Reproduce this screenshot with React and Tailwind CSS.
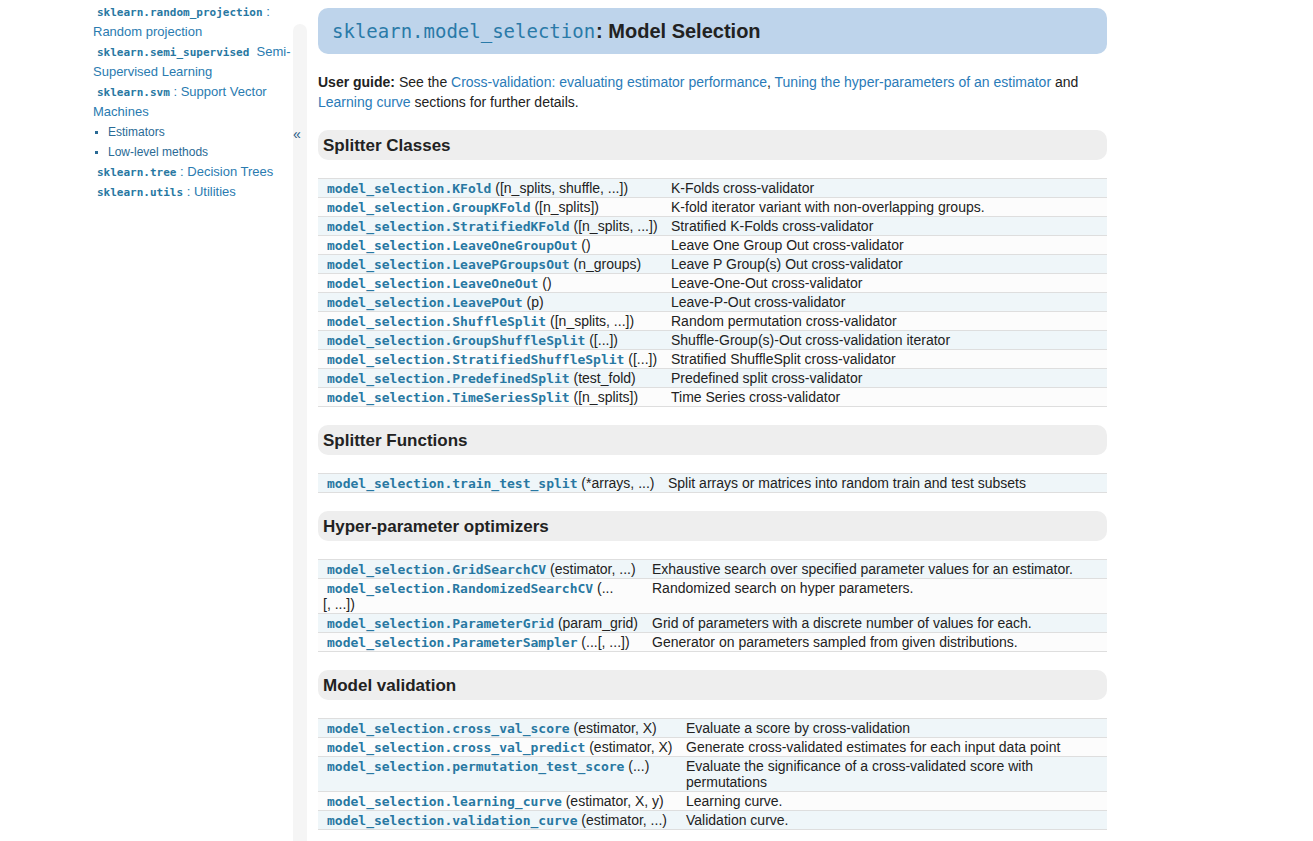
import React from 'react';

const sans = { fontFamily: '"Liberation Sans", Arial, sans-serif' };

const Code = ({ children, className = '' }) => (
  <code className={`font-['DejaVu_Sans_Mono',monospace] font-bold text-[#2878a2] text-[13px] leading-none pl-[4px] ${className}`}>
    {children}
  </code>
);

const SideCode = ({ children }) => (
  <code className="font-['DejaVu_Sans_Mono',monospace] font-bold text-[11px] leading-none text-[#2878a2] pl-[4px]">
    {children}
  </code>
);

const sections = [
  {
    title: 'Splitter Classes',
    col: 'grid-cols-[353px_1fr]',
    rows: [
      ['KFold', '([n_splits, shuffle, ...])', 'K-Folds cross-validator'],
      ['GroupKFold', '([n_splits])', 'K-fold iterator variant with non-overlapping groups.'],
      ['StratifiedKFold', '([n_splits, ...])', 'Stratified K-Folds cross-validator'],
      ['LeaveOneGroupOut', '()', 'Leave One Group Out cross-validator'],
      ['LeavePGroupsOut', '(n_groups)', 'Leave P Group(s) Out cross-validator'],
      ['LeaveOneOut', '()', 'Leave-One-Out cross-validator'],
      ['LeavePOut', '(p)', 'Leave-P-Out cross-validator'],
      ['ShuffleSplit', '([n_splits, ...])', 'Random permutation cross-validator'],
      ['GroupShuffleSplit', '([...])', 'Shuffle-Group(s)-Out cross-validation iterator'],
      ['StratifiedShuffleSplit', '([...])', 'Stratified ShuffleSplit cross-validator'],
      ['PredefinedSplit', '(test_fold)', 'Predefined split cross-validator'],
      ['TimeSeriesSplit', '([n_splits])', 'Time Series cross-validator'],
    ],
  },
  {
    title: 'Splitter Functions',
    col: 'grid-cols-[350px_1fr]',
    rows: [['train_test_split', '(*arrays, ...)', 'Split arrays or matrices into random train and test subsets']],
  },
  {
    title: 'Hyper-parameter optimizers',
    col: 'grid-cols-[334px_1fr]',
    rows: [
      ['GridSearchCV', '(estimator, ...)', 'Exhaustive search over specified parameter values for an estimator.'],
      ['RandomizedSearchCV', ['(...', '[, ...])'], 'Randomized search on hyper parameters.'],
      ['ParameterGrid', '(param_grid)', 'Grid of parameters with a discrete number of values for each.'],
      ['ParameterSampler', '(...[, ...])', 'Generator on parameters sampled from given distributions.'],
    ],
  },
  {
    title: 'Model validation',
    col: 'grid-cols-[368px_1fr]',
    rows: [
      ['cross_val_score', '(estimator, X)', 'Evaluate a score by cross-validation'],
      ['cross_val_predict', '(estimator, X)', 'Generate cross-validated estimates for each input data point'],
      ['permutation_test_score', '(...)', ['Evaluate the significance of a cross-validated score with', 'permutations']],
      ['learning_curve', '(estimator, X, y)', 'Learning curve.'],
      ['validation_curve', '(estimator, ...)', 'Validation curve.'],
    ],
  },
];

const lines = (v) =>
  Array.isArray(v) ? (
    <>
      {v[0]}
      <br />
      {v[1]}
    </>
  ) : (
    v
  );

const Sidebar = () => (
  <div className="w-[293px] shrink-0 pl-[93px] pt-[2px] text-[13px] leading-[20px] text-[#2a7bb0]">
    <div>
      <SideCode>sklearn.random_projection</SideCode> :
      <br />
      Random projection
    </div>
    <div>
      <SideCode>sklearn.semi_supervised</SideCode> &nbsp;Semi-
      <br />
      Supervised Learning
    </div>
    <div>
      <SideCode>sklearn.svm</SideCode> : Support Vector
      <br />
      Machines
    </div>
    <ul className="text-[12px] leading-[20px] text-[#2a6a95]">
      <li className="flex items-center">
        <span className="w-[3px] h-[3px] bg-[#2a6a95] ml-[2px] mr-[10px]" />
        Estimators
      </li>
      <li className="flex items-center">
        <span className="w-[3px] h-[3px] bg-[#2a6a95] ml-[2px] mr-[10px]" />
        Low-level methods
      </li>
    </ul>
    <div>
      <SideCode>sklearn.tree</SideCode> : Decision Trees
    </div>
    <div>
      <SideCode>sklearn.utils</SideCode> : Utilities
    </div>
  </div>
);

const Section = ({ s }) => (
  <div className="mt-[18px]">
    <h2 className="h-[30px] flex items-center pl-[5px] rounded-[10px] bg-[#eeeeee] text-[17px] font-bold text-[#222]">
      <span className="mt-[1px]">{s.title}</span>
    </h2>
    <div className="mt-[18px] border-t border-[#dedede]">
      {s.rows.map((r, i) => (
        <div
          key={r[0]}
          className={`grid ${s.col} border-b border-[#dedede] py-[1px] text-[14px] leading-[16px] text-[#222] ${
            i % 2 === 0 ? 'bg-[#eff6f9]' : 'bg-[#fcfcfc]'
          }`}
        >
          <div className="pl-[5px] pr-[5px]">
            <Code>model_selection.{r[0]}</Code> {lines(r[1])}
          </div>
          <div className="pr-[5px]">{lines(r[2])}</div>
        </div>
      ))}
    </div>
  </div>
);

export default function App() {
  return (
    <div className="flex min-h-[841px] bg-white" style={sans}>
      <Sidebar />
      <div className="w-[14px] shrink-0 mt-[24px] rounded-t-[8px] bg-[#f5f5f5] relative">
        <span className="absolute left-0 top-[102px] text-[14px] leading-[16px] text-[#2a5a85]">«</span>
      </div>
      <main className="w-[789px] shrink-0 ml-[11px] pt-[8px]">
        <h1 className="h-[46px] flex items-center pl-[14px] rounded-[10px] bg-[#bed4eb] text-[20px] font-bold text-[#222]">
          <code className="font-['DejaVu_Sans_Mono',monospace] font-normal text-[19px] text-[#2a7aa8] pr-[1px]">sklearn.model_selection</code>
          <span>: Model Selection</span>
        </h1>
        <p className="mt-[18px] text-[14px] leading-[20px] text-[#222]">
          <strong>User guide:</strong> See the{' '}
          <a className="text-[#2a7bb8]">Cross-validation: evaluating estimator performance</a>,{' '}
          <a className="text-[#2a7bb8]">Tuning the hyper-parameters of an estimator</a> and{' '}
          <a className="text-[#2a7bb8]">Learning curve</a> sections for further details.
        </p>
        {sections.map((s) => (
          <Section key={s.title} s={s} />
        ))}
      </main>
    </div>
  );
}
